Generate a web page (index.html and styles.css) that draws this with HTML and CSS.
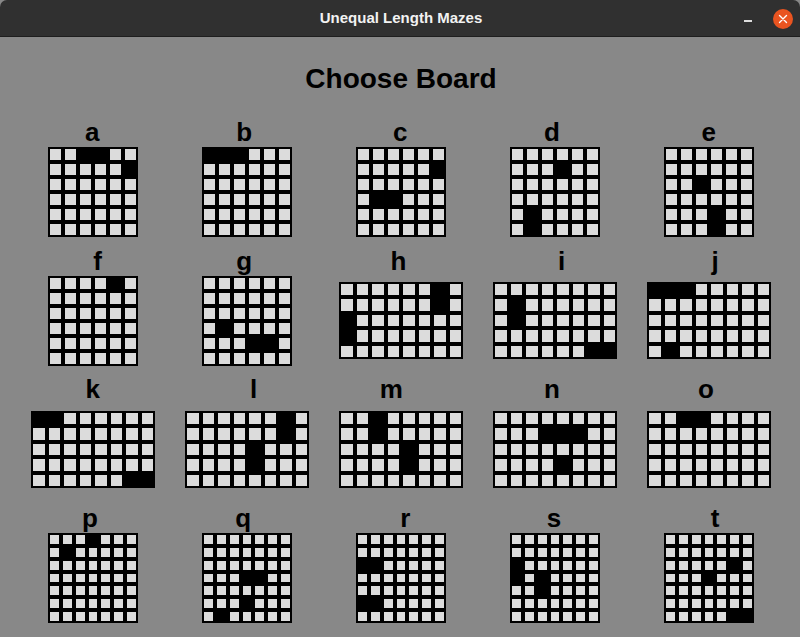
FILE: index.html
```html
<!DOCTYPE html>
<html>
<head>
<meta charset="utf-8">
<title>Unequal Length Mazes</title>
<link rel="stylesheet" href="styles.css">
</head>
<body>
<div class="window">
  <header class="titlebar">
    <span class="title">Unequal Length Mazes</span>
    <span class="minimize"></span>
    <span class="close">
      <svg width="20" height="20" viewBox="0 0 20 20"><path d="M6.5 6.5 L13.5 13.5 M13.5 6.5 L6.5 13.5" stroke="#fff" stroke-width="1.4" stroke-linecap="round" fill="none"/></svg>
    </span>
  </header>
  <main class="content">
    <h1 class="heading">Choose Board</h1>
    <div class="boards">
      <!-- a -->
      <div class="tile"><div class="label la">a</div><div class="slot"><div class="grid g66">
        <i></i><i></i><i class="k"></i><i class="k"></i><i></i><i></i>
        <i></i><i></i><i></i><i></i><i></i><i class="k"></i>
        <i></i><i></i><i></i><i></i><i></i><i></i>
        <i></i><i></i><i></i><i></i><i></i><i></i>
        <i></i><i></i><i></i><i></i><i></i><i></i>
        <i></i><i></i><i></i><i></i><i></i><i></i>
      </div></div></div>
      <!-- b -->
      <div class="tile"><div class="label lb">b</div><div class="slot"><div class="grid g66">
        <i class="k"></i><i class="k"></i><i class="k"></i><i></i><i></i><i></i>
        <i></i><i></i><i></i><i></i><i></i><i></i>
        <i></i><i></i><i></i><i></i><i></i><i></i>
        <i></i><i></i><i></i><i></i><i></i><i></i>
        <i></i><i></i><i></i><i></i><i></i><i></i>
        <i></i><i></i><i></i><i></i><i></i><i></i>
      </div></div></div>
      <!-- c -->
      <div class="tile"><div class="label lc">c</div><div class="slot"><div class="grid g66">
        <i></i><i></i><i></i><i></i><i></i><i></i>
        <i></i><i></i><i></i><i></i><i></i><i class="k"></i>
        <i></i><i></i><i></i><i></i><i></i><i></i>
        <i></i><i class="k"></i><i class="k"></i><i></i><i></i><i></i>
        <i></i><i></i><i></i><i></i><i></i><i></i>
        <i></i><i></i><i></i><i></i><i></i><i></i>
      </div></div></div>
      <!-- d -->
      <div class="tile"><div class="label ld">d</div><div class="slot"><div class="grid g66">
        <i></i><i></i><i></i><i></i><i></i><i></i>
        <i></i><i></i><i></i><i class="k"></i><i></i><i></i>
        <i></i><i></i><i></i><i></i><i></i><i></i>
        <i></i><i></i><i></i><i></i><i></i><i></i>
        <i></i><i class="k"></i><i></i><i></i><i></i><i></i>
        <i></i><i class="k"></i><i></i><i></i><i></i><i></i>
      </div></div></div>
      <!-- e -->
      <div class="tile"><div class="label le">e</div><div class="slot"><div class="grid g66">
        <i></i><i></i><i></i><i></i><i></i><i></i>
        <i></i><i></i><i></i><i></i><i></i><i></i>
        <i></i><i></i><i class="k"></i><i></i><i></i><i></i>
        <i></i><i></i><i></i><i></i><i></i><i></i>
        <i></i><i></i><i></i><i class="k"></i><i></i><i></i>
        <i></i><i></i><i></i><i class="k"></i><i></i><i></i>
      </div></div></div>
      <!-- f -->
      <div class="tile"><div class="label lf">f</div><div class="slot"><div class="grid g66">
        <i></i><i></i><i></i><i></i><i class="k"></i><i></i>
        <i></i><i></i><i></i><i></i><i></i><i></i>
        <i></i><i></i><i></i><i></i><i></i><i></i>
        <i></i><i></i><i></i><i></i><i></i><i></i>
        <i></i><i></i><i></i><i></i><i></i><i></i>
        <i></i><i></i><i></i><i></i><i></i><i></i>
      </div></div></div>
      <!-- g -->
      <div class="tile"><div class="label lg">g</div><div class="slot"><div class="grid g66">
        <i></i><i></i><i></i><i></i><i></i><i></i>
        <i></i><i></i><i></i><i></i><i></i><i></i>
        <i></i><i></i><i></i><i></i><i></i><i></i>
        <i></i><i class="k"></i><i></i><i></i><i></i><i></i>
        <i></i><i></i><i></i><i class="k"></i><i class="k"></i><i></i>
        <i></i><i></i><i></i><i></i><i></i><i></i>
      </div></div></div>
      <!-- h -->
      <div class="tile"><div class="label lh">h</div><div class="slot"><div class="grid g85">
        <i></i><i></i><i></i><i></i><i></i><i></i><i class="k"></i><i></i>
        <i></i><i></i><i></i><i></i><i></i><i></i><i class="k"></i><i></i>
        <i class="k"></i><i></i><i></i><i></i><i></i><i></i><i></i><i></i>
        <i class="k"></i><i></i><i></i><i></i><i></i><i></i><i></i><i></i>
        <i></i><i></i><i></i><i></i><i></i><i></i><i></i><i></i>
      </div></div></div>
      <!-- i -->
      <div class="tile"><div class="label li">i</div><div class="slot"><div class="grid g85">
        <i></i><i></i><i></i><i></i><i></i><i></i><i></i><i></i>
        <i></i><i class="k"></i><i></i><i></i><i></i><i></i><i></i><i></i>
        <i></i><i class="k"></i><i></i><i></i><i></i><i></i><i></i><i></i>
        <i></i><i></i><i></i><i></i><i></i><i></i><i></i><i></i>
        <i></i><i></i><i></i><i></i><i></i><i></i><i class="k"></i><i class="k"></i>
      </div></div></div>
      <!-- j -->
      <div class="tile"><div class="label lj">j</div><div class="slot"><div class="grid g85">
        <i class="k"></i><i class="k"></i><i class="k"></i><i></i><i></i><i></i><i></i><i></i>
        <i></i><i></i><i></i><i></i><i></i><i></i><i></i><i></i>
        <i></i><i></i><i></i><i></i><i></i><i></i><i></i><i></i>
        <i></i><i></i><i></i><i></i><i></i><i></i><i></i><i></i>
        <i></i><i class="k"></i><i></i><i></i><i></i><i></i><i></i><i></i>
      </div></div></div>
      <!-- k -->
      <div class="tile"><div class="label lk">k</div><div class="slot"><div class="grid g85">
        <i class="k"></i><i class="k"></i><i></i><i></i><i></i><i></i><i></i><i></i>
        <i></i><i></i><i></i><i></i><i></i><i></i><i></i><i></i>
        <i></i><i></i><i></i><i></i><i></i><i></i><i></i><i></i>
        <i></i><i></i><i></i><i></i><i></i><i></i><i></i><i></i>
        <i></i><i></i><i></i><i></i><i></i><i></i><i class="k"></i><i class="k"></i>
      </div></div></div>
      <!-- l -->
      <div class="tile"><div class="label ll">l</div><div class="slot"><div class="grid g85">
        <i></i><i></i><i></i><i></i><i></i><i></i><i class="k"></i><i></i>
        <i></i><i></i><i></i><i></i><i></i><i></i><i class="k"></i><i></i>
        <i></i><i></i><i></i><i></i><i class="k"></i><i></i><i></i><i></i>
        <i></i><i></i><i></i><i></i><i class="k"></i><i></i><i></i><i></i>
        <i></i><i></i><i></i><i></i><i></i><i></i><i></i><i></i>
      </div></div></div>
      <!-- m -->
      <div class="tile"><div class="label lm">m</div><div class="slot"><div class="grid g85">
        <i></i><i></i><i class="k"></i><i></i><i></i><i></i><i></i><i></i>
        <i></i><i></i><i class="k"></i><i></i><i></i><i></i><i></i><i></i>
        <i></i><i></i><i></i><i></i><i class="k"></i><i></i><i></i><i></i>
        <i></i><i></i><i></i><i></i><i class="k"></i><i></i><i></i><i></i>
        <i></i><i></i><i></i><i></i><i></i><i></i><i></i><i></i>
      </div></div></div>
      <!-- n -->
      <div class="tile"><div class="label ln">n</div><div class="slot"><div class="grid g85">
        <i></i><i></i><i></i><i></i><i></i><i></i><i></i><i></i>
        <i></i><i></i><i></i><i class="k"></i><i class="k"></i><i class="k"></i><i></i><i></i>
        <i></i><i></i><i></i><i></i><i></i><i></i><i></i><i></i>
        <i></i><i></i><i></i><i></i><i class="k"></i><i></i><i></i><i></i>
        <i></i><i></i><i></i><i></i><i></i><i></i><i></i><i></i>
      </div></div></div>
      <!-- o -->
      <div class="tile"><div class="label lo">o</div><div class="slot"><div class="grid g85">
        <i></i><i></i><i class="k"></i><i class="k"></i><i></i><i></i><i></i><i></i>
        <i></i><i></i><i></i><i></i><i></i><i></i><i></i><i></i>
        <i></i><i></i><i></i><i></i><i></i><i></i><i></i><i></i>
        <i></i><i></i><i></i><i></i><i></i><i></i><i></i><i></i>
        <i></i><i></i><i></i><i></i><i></i><i></i><i></i><i></i>
      </div></div></div>
      <!-- p -->
      <div class="tile"><div class="label lp">p</div><div class="slot"><div class="grid g77">
        <i></i><i></i><i></i><i class="k"></i><i></i><i></i><i></i>
        <i></i><i class="k"></i><i></i><i></i><i></i><i></i><i></i>
        <i></i><i></i><i></i><i></i><i></i><i></i><i></i>
        <i></i><i></i><i></i><i></i><i></i><i></i><i></i>
        <i></i><i></i><i></i><i></i><i></i><i></i><i></i>
        <i></i><i></i><i></i><i></i><i></i><i></i><i></i>
        <i></i><i></i><i></i><i></i><i></i><i></i><i></i>
      </div></div></div>
      <!-- q -->
      <div class="tile"><div class="label lq">q</div><div class="slot"><div class="grid g77">
        <i></i><i></i><i></i><i></i><i></i><i></i><i></i>
        <i></i><i></i><i></i><i></i><i></i><i></i><i></i>
        <i></i><i></i><i></i><i></i><i></i><i></i><i></i>
        <i></i><i></i><i></i><i class="k"></i><i class="k"></i><i></i><i></i>
        <i></i><i></i><i></i><i></i><i></i><i></i><i></i>
        <i></i><i></i><i></i><i class="k"></i><i></i><i></i><i></i>
        <i></i><i class="k"></i><i></i><i></i><i></i><i></i><i></i>
      </div></div></div>
      <!-- r -->
      <div class="tile"><div class="label lr">r</div><div class="slot"><div class="grid g77">
        <i></i><i></i><i></i><i></i><i></i><i></i><i></i>
        <i></i><i></i><i></i><i></i><i></i><i></i><i></i>
        <i class="k"></i><i class="k"></i><i></i><i></i><i></i><i></i><i></i>
        <i></i><i></i><i></i><i></i><i></i><i></i><i></i>
        <i></i><i></i><i></i><i></i><i></i><i></i><i></i>
        <i class="k"></i><i class="k"></i><i></i><i></i><i></i><i></i><i></i>
        <i></i><i></i><i></i><i></i><i></i><i></i><i></i>
      </div></div></div>
      <!-- s -->
      <div class="tile"><div class="label ls">s</div><div class="slot"><div class="grid g77">
        <i></i><i></i><i></i><i></i><i></i><i></i><i></i>
        <i></i><i></i><i></i><i></i><i></i><i></i><i></i>
        <i class="k"></i><i></i><i></i><i></i><i></i><i></i><i></i>
        <i class="k"></i><i></i><i class="k"></i><i></i><i></i><i></i><i></i>
        <i></i><i></i><i class="k"></i><i></i><i></i><i></i><i></i>
        <i></i><i></i><i></i><i></i><i></i><i></i><i></i>
        <i></i><i></i><i></i><i></i><i></i><i></i><i></i>
      </div></div></div>
      <!-- t -->
      <div class="tile"><div class="label lt">t</div><div class="slot"><div class="grid g77">
        <i></i><i></i><i></i><i></i><i></i><i></i><i></i>
        <i></i><i></i><i></i><i></i><i></i><i></i><i></i>
        <i></i><i></i><i></i><i></i><i></i><i class="k"></i><i></i>
        <i></i><i></i><i></i><i class="k"></i><i></i><i></i><i></i>
        <i></i><i></i><i></i><i></i><i></i><i></i><i></i>
        <i></i><i></i><i></i><i></i><i></i><i></i><i></i>
        <i></i><i></i><i></i><i></i><i></i><i class="k"></i><i class="k"></i>
      </div></div></div>
    </div>
  </main>
</div>
</body>
</html>
```
FILE: styles.css
```css
html, body {
  margin: 0;
  padding: 0;
}
body {
  width: 800px;
  height: 637px;
  overflow: hidden;
  background: #888888;
  font-family: "Liberation Sans", Arial, sans-serif;
}
.window {
  width: 800px;
  height: 637px;
  display: flex;
  flex-direction: column;
}
.titlebar {
  height: 36px;
  flex: 0 0 36px;
  background: #303030;
  border-bottom: 1px solid #1e1e1e;
  border-radius: 7px 7px 0 0;
  display: flex;
  align-items: center;
  justify-content: center;
  position: relative;
}
.title {
  color: #f2f2f2;
  font-family: "Liberation Sans", Arial, sans-serif;
  font-weight: bold;
  font-size: 15px;
  line-height: 36px;
  padding-left: 2px;
}
.minimize {
  position: absolute;
  left: 744px;
  top: 20px;
  width: 8px;
  height: 2px;
  background: #dddddd;
}
.close {
  position: absolute;
  left: 773px;
  top: 9px;
  width: 20px;
  height: 20px;
  border-radius: 50%;
  background: #e95420;
  display: block;
}
.close svg {
  display: block;
}
.content {
  flex: 1;
  display: flex;
  flex-direction: column;
  align-items: flex-start;
  padding: 26px 0 0 16px;
}
.heading {
  margin: 0;
  width: 770px;
  text-align: center;
  font-size: 28px;
  line-height: 32px;
  font-weight: bold;
  color: #000;
}
.boards {
  margin-top: 22px;
  display: grid;
  grid-template-columns: repeat(5, 154px);
  row-gap: 8.67px;
}
.tile {
  display: flex;
  flex-direction: column;
  align-items: center;
}
.label {
  height: 30px;
  line-height: 30px;
  font-size: 26px;
  font-weight: bold;
  color: #000;
  text-align: center;
}
/* label placement, as the labels sit in the reference */
.la { margin-left: -1.6px; }
.lb { margin-left: -5.6px; }
.lc { margin-left: -1.4px; }
.ld { margin-left: -6px; }
.le { margin-left: -0.4px; }
.lf { margin-left: 9px; }
.lg { margin-left: -5.6px; }
.lh { margin-left: -5px; }
.li { margin-left: 13.4px; }
.lj { margin-left: 12px; }
.lk { margin-left: -0.4px; }
.ll { margin-left: 13px; }
.lm { margin-left: -19.4px; }
.ln { margin-left: -6px; }
.lo { margin-left: -6px; }
.lp { margin-left: -6px; }
.lq { margin-left: -7.4px; }
.lr { margin-left: 8.6px; }
.ls { margin-left: -2px; }
.lt { margin-left: 12px; }
.slot {
  width: 124px;
  height: 90px;
  display: flex;
  align-items: center;
  justify-content: center;
}
.grid {
  display: grid;
  background: #000;
}
.g66 {
  grid-template-columns: repeat(6, 15px);
  grid-template-rows: repeat(6, 15px);
}
.g85 {
  grid-template-columns: repeat(8, 15.5px);
  grid-template-rows: repeat(5, 15.5px);
}
.g77 {
  grid-template-columns: repeat(7, 12.857px);
  grid-template-rows: repeat(7, 12.857px);
}
.grid i {
  display: block;
  box-sizing: border-box;
  border: 2px solid #000;
  background: #dcdcdc;
}
.grid i.k {
  background: #000;
}
```
